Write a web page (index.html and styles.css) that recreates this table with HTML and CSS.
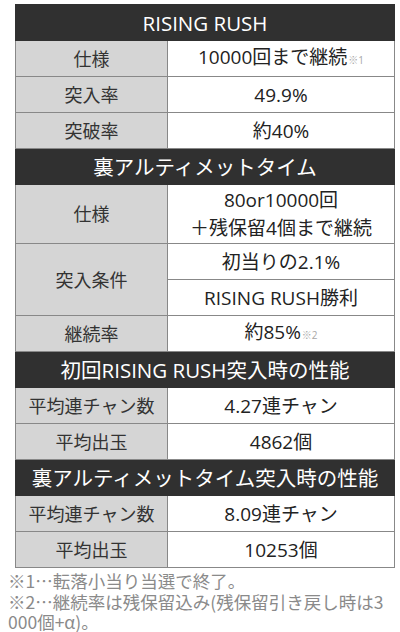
FILE: index.html
```html
<!DOCTYPE html>
<html lang="ja">
<head>
<meta charset="utf-8">
<link rel="stylesheet" href="styles.css">
</head>
<body>
<div class="page">
  <table class="spec">
    <colgroup><col class="c1"><col class="c2"></colgroup>
    <tr><th colspan="2">RISING RUSH</th></tr>
    <tr><td class="lbl">仕様</td><td class="val">10000回まで継続<span class="note">※1</span></td></tr>
    <tr><td class="lbl">突入率</td><td class="val">49.9%</td></tr>
    <tr><td class="lbl">突破率</td><td class="val">約40%</td></tr>
    <tr><th colspan="2">裏アルティメットタイム</th></tr>
    <tr><td class="lbl">仕様</td><td class="val two">80or10000回<br>＋残保留4個まで継続</td></tr>
    <tr><td class="lbl" rowspan="2">突入条件</td><td class="val">初当りの2.1%</td></tr>
    <tr><td class="val">RISING RUSH勝利</td></tr>
    <tr><td class="lbl">継続率</td><td class="val">約85%<span class="note">※2</span></td></tr>
    <tr><th colspan="2">初回RISING RUSH突入時の性能</th></tr>
    <tr><td class="lbl">平均連チャン数</td><td class="val">4.27連チャン</td></tr>
    <tr><td class="lbl">平均出玉</td><td class="val">4862個</td></tr>
    <tr><th colspan="2">裏アルティメットタイム突入時の性能</th></tr>
    <tr><td class="lbl">平均連チャン数</td><td class="val">8.09連チャン</td></tr>
    <tr><td class="lbl">平均出玉</td><td class="val">10253個</td></tr>
  </table>
  <p class="notes">※1…転落小当り当選で終了。<br>※2…継続率は残保留込み(残保留引き戻し時は3<wbr>000個+α)。</p>
</div>
</body>
</html>
```
FILE: styles.css
```css
html, body {
  margin: 0;
  padding: 0;
  background: #ffffff;
}
body {
  font-family: "Open Sans", "Noto Sans CJK JP", sans-serif;
  color: #222222;
}
.page {
  padding: 4px 0 0 8px;
  width: 386px;
}
.spec {
  border-collapse: collapse;
  margin-left: 7px;
  width: 379px;
  table-layout: fixed;
}
.c1 { width: 152px; }
.c2 { width: 227px; }
.spec th,
.spec td {
  border: 1px solid #888888;
  height: 35px;
  padding: 0;
  text-align: center;
  vertical-align: middle;
  line-height: 24px;
}
.spec th {
  background: #303030;
  color: #ffffff;
  font-weight: normal;
  font-size: 20.5px;
  border-color: #303030;
}
.spec .lbl {
  background: #d5d5d5;
  font-size: 18px;
  color: #333333;
}
.spec .val {
  font-size: 19px;
  background: #ffffff;
}
.spec .two {
  height: 58px;
  line-height: 28px;
}
.note {
  font-size: 10px;
  color: #a8a8a8;
  margin-left: 1px;
}
.notes {
  margin: 3px 0 0 0;
  font-family: "Noto Sans CJK JP", sans-serif;
  font-size: 17.5px;
  line-height: 20.5px;
  color: #8a8a8a;
}
```
